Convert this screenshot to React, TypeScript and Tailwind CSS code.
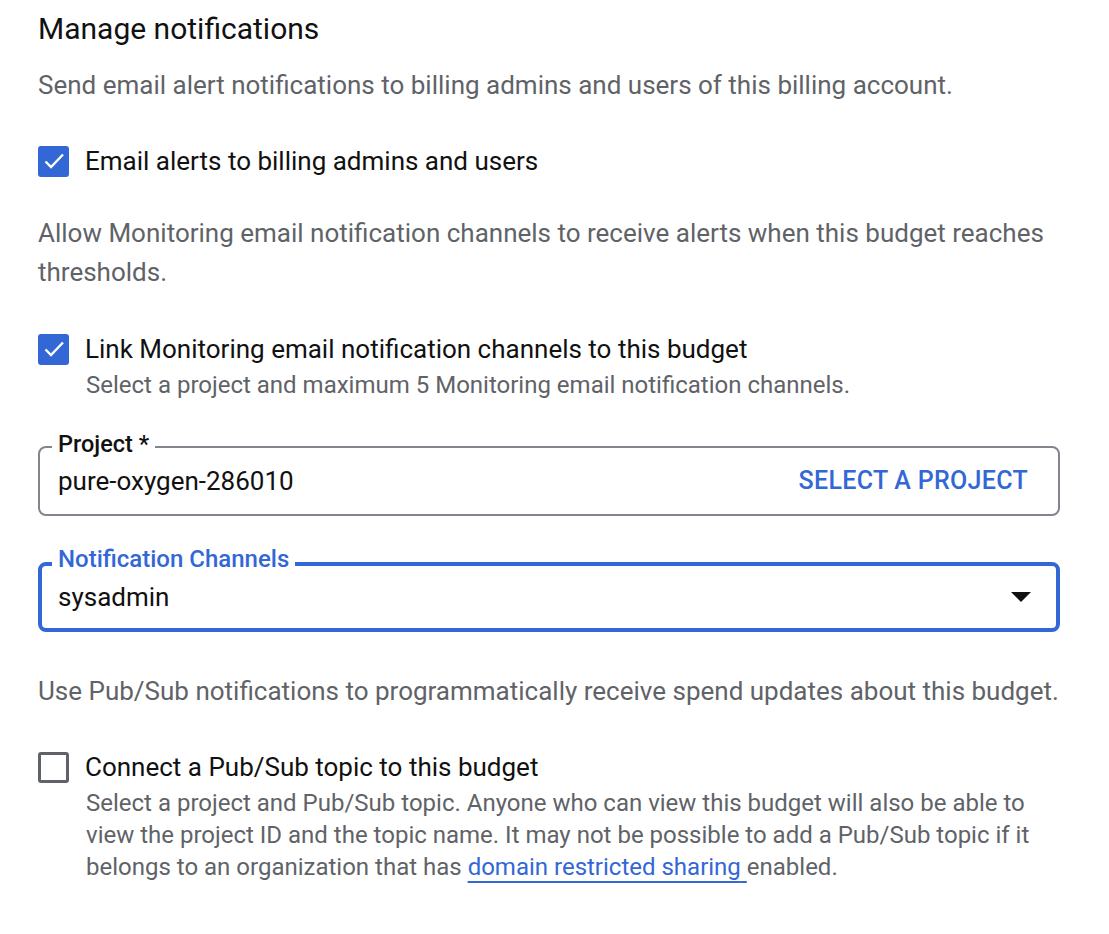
import React, { useState } from "react";

const font = { fontFamily: "Roboto, 'Liberation Sans', sans-serif" };

function Check({ checked, onClick }: { checked: boolean; onClick: () => void }) {
  if (checked) {
    return (
      <button
        onClick={onClick}
        className="w-[31px] h-[31px] shrink-0 rounded-[3px] bg-[#3367d6] flex items-center justify-center"
      >
        <svg width="24" height="24" viewBox="0 0 24 24">
          <path d="M3.5 12.5 L9 18 L21 5.5" fill="none" stroke="white" strokeWidth="2.4" />
        </svg>
      </button>
    );
  }
  return (
    <button
      onClick={onClick}
      className="w-[31px] h-[31px] shrink-0 rounded-[3px] border-[3px] border-[#5f6368] bg-white"
    />
  );
}

export default function App() {
  const [email, setEmail] = useState(true);
  const [link, setLink] = useState(true);
  const [pubsub, setPubsub] = useState(false);

  return (
    <div style={font} className="bg-white min-h-[934px] pl-[38px] pr-[49px] text-[#202124]">
      <h2 className="mt-[11px] text-[30px] leading-[36px] font-normal text-[#111]">Manage notifications</h2>

      <p className="mt-[18px] text-[26px] leading-[40px] text-[#5f6368]">
        Send email alert notifications to billing admins and users of this billing account.
      </p>

      <div className="mt-[36px] flex items-center h-[40px]">
        <Check checked={email} onClick={() => setEmail(!email)} />
        <span className="ml-[16px] text-[26px] text-[#111]">Email alerts to billing admins and users</span>
      </div>

      <p className="mt-[33px] text-[26px] leading-[39px] text-[#5f6368]">
        Allow Monitoring email notification channels to receive alerts when this budget reaches thresholds.
      </p>

      <div className="mt-[37px] flex items-center h-[40px]">
        <Check checked={link} onClick={() => setLink(!link)} />
        <span className="ml-[16px] text-[26px] text-[#111]">Link Monitoring email notification channels to this budget</span>
      </div>
      <p className="pl-[48px] text-[24px] leading-[32px] text-[#5f6368]">
        Select a project and maximum 5 Monitoring email notification channels.
      </p>

      <div className="relative mt-[45px] h-[70px] rounded-[8px] border-2 border-[#80868b] flex items-center justify-between pl-[18px] pr-[30px]">
        <span className="absolute -top-[18px] left-[12px] bg-white px-[6px] text-[23.5px] leading-[28px] font-medium text-[#111]">
          Project *
        </span>
        <span className="text-[26px] text-[#111]">pure-oxygen-286010</span>
        <button className="text-[25px] font-medium text-[#3367d6] tracking-[0.3px]">SELECT A PROJECT</button>
      </div>

      <div className="relative mt-[46px] h-[70px] rounded-[8px] border-4 border-[#3367d6] flex items-center justify-between pl-[16px] pr-[25px]">
        <span className="absolute -top-[21px] left-[10px] bg-white px-[6px] text-[24px] leading-[28px] font-medium text-[#3367d6]">
          Notification Channels
        </span>
        <span className="text-[26px] text-[#111]">sysadmin</span>
        <svg width="20" height="10" viewBox="0 0 20 10">
          <polygon points="0,0 20,0 10,10" fill="#111" />
        </svg>
      </div>

      <p className="mt-[39px] text-[26px] leading-[40px] text-[#5f6368]">
        Use Pub/Sub notifications to programmatically receive spend updates about this budget.
      </p>

      <div className="mt-[36px] flex items-center h-[40px]">
        <Check checked={pubsub} onClick={() => setPubsub(!pubsub)} />
        <span className="ml-[16px] text-[26px] text-[#111]">Connect a Pub/Sub topic to this budget</span>
      </div>
      <p className="pl-[48px] pr-[20px] text-[24px] leading-[32px] text-[#5f6368]">
        Select a project and Pub/Sub topic. Anyone who can view this budget will also be able to view the project ID and the topic name. It may not be possible to add a Pub/Sub topic if it belongs to an organization that has{" "}
        <a href="#" className="text-[#3367d6] underline decoration-2 underline-offset-[6px]">
          domain restricted sharing{" "}
        </a>
        enabled.
      </p>
    </div>
  );
}
